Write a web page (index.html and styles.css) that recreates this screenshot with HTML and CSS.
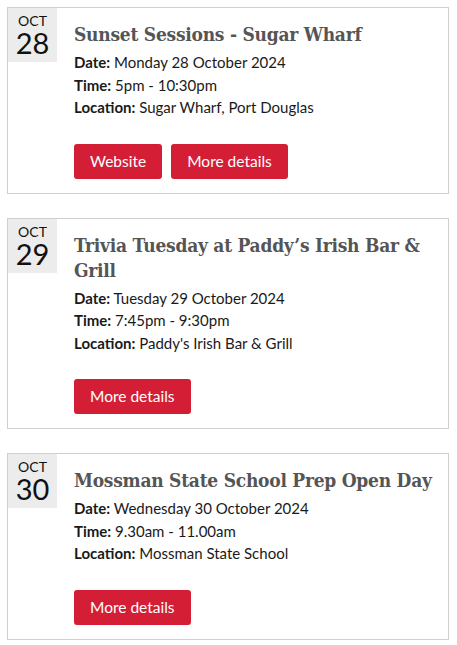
FILE: index.html
```html
<!DOCTYPE html>
<html lang="en">
<head>
    <meta charset="UTF-8">
    <meta name="viewport" content="width=device-width, initial-scale=1.0">
    <title>Events</title>
    <link rel="stylesheet" href="styles.css">
</head>
<body>
    <div class="event-list">
        <div class="event">
            <div class="event-date">
                <span class="month">OCT</span>
                <span class="day">28</span>
            </div>
            <div class="event-body">
                <h2>Sunset Sessions - Sugar Wharf</h2>
                <p><strong>Date:</strong> Monday 28 October 2024</p>
                <p><strong>Time:</strong> 5pm - 10:30pm</p>
                <p><strong>Location:</strong> Sugar Wharf, Port Douglas</p>
                <div class="button-group">
                    <a class="btn" href="#">Website</a>
                    <a class="btn" href="#">More details</a>
                </div>
            </div>
        </div>

        <div class="event">
            <div class="event-date">
                <span class="month">OCT</span>
                <span class="day">29</span>
            </div>
            <div class="event-body">
                <h2>Trivia Tuesday at Paddy’s Irish Bar &amp; Grill</h2>
                <p><strong>Date:</strong> Tuesday 29 October 2024</p>
                <p><strong>Time:</strong> 7:45pm - 9:30pm</p>
                <p><strong>Location:</strong> Paddy's Irish Bar &amp; Grill</p>
                <div class="button-group">
                    <a class="btn" href="#">More details</a>
                </div>
            </div>
        </div>

        <div class="event">
            <div class="event-date">
                <span class="month">OCT</span>
                <span class="day">30</span>
            </div>
            <div class="event-body">
                <h2>Mossman State School Prep Open Day</h2>
                <p><strong>Date:</strong> Wednesday 30 October 2024</p>
                <p><strong>Time:</strong> 9.30am - 11.00am</p>
                <p><strong>Location:</strong> Mossman State School</p>
                <div class="button-group">
                    <a class="btn" href="#">More details</a>
                </div>
            </div>
        </div>
    </div>
</body>
</html>
```

FILE: styles.css
```css
body {
    font-family: 'Lato', 'Liberation Sans', sans-serif;
    margin: 0;
    padding: 7px 8px 7px 7px;
    background-color: #fff;
    color: #1a1a1a;
}

.event-list {
    display: flex;
    flex-direction: column;
    gap: 24px;
}

.event {
    display: flex;
    align-items: flex-start;
    border: 1px solid #cfcfcf;
}

.event-date {
    flex: 0 0 49px;
    height: 54px;
    background-color: #ececec;
    display: flex;
    flex-direction: column;
    align-items: center;
    color: #111;
}

.event-date .month {
    font-size: 14px;
    line-height: 14px;
    margin-top: 6px;
}

.event-date .day {
    font-size: 29px;
    line-height: 29px;
}

.event-body {
    flex: 1;
    padding: 14px 4px 14px 17px;
}

.event-body h2 {
    font-family: 'DejaVu Serif', serif;
    font-stretch: condensed;
    font-weight: bold;
    font-size: 19px;
    letter-spacing: -0.25px;
    line-height: 25px;
    color: #555;
    margin: 0 0 4px;
}

.event-body p {
    font-size: 15px;
    line-height: 22.5px;
    margin: 0;
}

.button-group {
    display: flex;
    gap: 9px;
    margin-top: 25px;
}

.btn {
    display: inline-block;
    background-color: #d41e36;
    color: #fff;
    text-decoration: none;
    font-size: 15.5px;
    line-height: 35px;
    padding: 0 16px;
    border-radius: 3px;
}
```
